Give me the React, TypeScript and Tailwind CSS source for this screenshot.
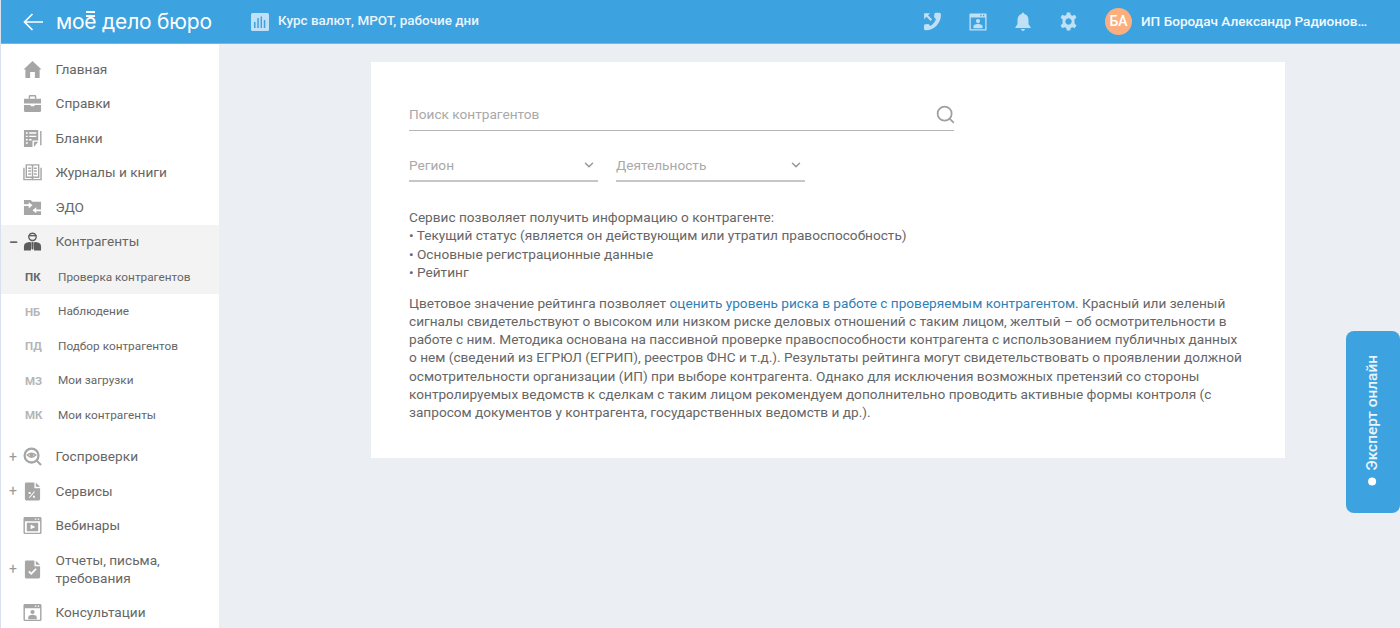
import React from 'react';
import { ChevronDown, Search } from 'lucide-react';

type IconProps = { className?: string };

const BackIcon = ({ className }: IconProps) => (
  <svg viewBox="0 0 20 18" className={className} fill="none" stroke="currentColor" strokeWidth="1.7">
    <path d="M20 9 H1.5 M9.5 1 L1.5 9 L9.5 17" />
  </svg>
);

const HomeIcon = ({ className }: IconProps) => (
  <svg viewBox="0 0 20 20" className={className} fill="currentColor">
    <path d="M10 1 L19.5 10 L17.5 10 L17.5 19 L12.5 19 L12.5 12.5 L7.5 12.5 L7.5 19 L2.5 19 L2.5 10 L0.5 10 Z" />
  </svg>
);

const CaseIcon = ({ className }: IconProps) => (
  <svg viewBox="0 0 20 20" className={className} fill="currentColor">
    <path d="M6 5 V2.5 Q6 1 7.5 1 H12.5 Q14 1 14 2.5 V5 H12.5 V2.5 H7.5 V5 Z" />
    <path d="M1 5 H19 V10 H1 Z" />
    <path d="M1 11.5 H8 V13 H12 V11.5 H19 V17.5 Q19 19 17.5 19 H2.5 Q1 19 1 17.5 Z" />
  </svg>
);

const FormIcon = ({ className }: IconProps) => (
  <svg viewBox="0 0 20 20" className={className} fill="currentColor">
    <path fillRule="evenodd" d="M1 1 H16 V12 H10 V19 H1 Z M3 3.5 V5 H5 V3.5 Z M6.5 3.5 V5 H14 V3.5 Z M3 7 V8.5 H5 V7 Z M6.5 7 V8.5 H14 V7 Z M3 10.5 V12 H5 V10.5 Z M6.5 10.5 V12 H9 V10.5 Z M3 14 V15.5 H5 V14 Z" />
    <path d="M11.5 13.5 H16 L11.5 19 Z" />
    <path d="M18 2 H19.5 V17 H18 Z" />
  </svg>
);

const BookIcon = ({ className }: IconProps) => (
  <svg viewBox="0 0 20 20" className={className} fill="none" stroke="currentColor" strokeWidth="1.5">
    <path d="M3.5 2 H9.2 L10 2.8 L10.8 2 H16.5 V15 H10.8 L10 16 L9.2 15 H3.5 Z" />
    <path d="M1 5 V17.5 H19 V5" />
    <path d="M5.5 5.5 H8.5 M5.5 8.5 H8.5 M5.5 11.5 H8.5 M11.5 5.5 H14.5 M11.5 8.5 H14.5 M11.5 11.5 H14.5" />
    <path d="M10 3 V18" />
  </svg>
);

const EdoIcon = ({ className }: IconProps) => (
  <svg viewBox="0 0 20 20" className={className} fill="currentColor">
    <path fillRule="evenodd" d="M1 2 H8 L10 4 H19 V18 H1 Z M1 6.5 V8.5 H6 V11 L10 7.5 L6 4.5 V6.5 Z M19 12 H14 V9.8 L10 13 L14 16 V14 H19 Z" />
  </svg>
);

const PersonIcon = ({ className }: IconProps) => (
  <svg viewBox="0 0 20 20" className={className} fill="currentColor">
    <path fillRule="evenodd" d="M10 0.5 A4.6 4.6 0 1 1 9.99 0.5 Z M10 2.2 C8 2.2 6.8 3.5 6.8 5 C6.8 7 8.2 8.2 10 8.2 C11.8 8.2 13.2 7 13.2 5 C13.2 3.5 12 2.2 10 2.2 Z" />
    <path d="M6 3.2 H14 V4.6 H6 Z" />
    <path d="M6.5 10.5 L9 11 L8.4 19.5 H1 V15 Q1 12 3.5 11.4 Z" />
    <path d="M13.5 10.5 L11 11 L11.6 19.5 H19 V15 Q19 12 16.5 11.4 Z" />
    <path d="M9.2 10.5 H10.8 L11 17 L10 19 L9 17 Z" />
  </svg>
);

const InspectIcon = ({ className }: IconProps) => (
  <svg viewBox="0 0 20 20" className={className} fill="none" stroke="currentColor">
    <circle cx="9" cy="9" r="7.3" strokeWidth="2.4" />
    <path d="M14.5 14.5 L19 19" strokeWidth="2.2" />
    <path d="M4.5 8.5 Q9 4.5 13.5 8.5 Q9 13 4.5 8.5 Z" strokeWidth="1.5" />
    <circle cx="9" cy="8.6" r="2" fill="currentColor" stroke="none" />
  </svg>
);

const ServiceIcon = ({ className }: IconProps) => (
  <svg viewBox="0 0 20 20" className={className} fill="currentColor">
    <path fillRule="evenodd" d="M3.5 0.5 H12 V6.5 H18 V18 Q18 19.5 16.5 19.5 H3.5 Q2 19.5 2 18 V2 Q2 0.5 3.5 0.5 Z M6 10.5 V12.5 H8 V10.5 Z M10.5 14.5 V16.5 H12.5 V14.5 Z M11.5 10 L6 16.5 H7.3 L12.8 10 Z" />
    <path d="M13.5 0.8 L18 5 H13.5 Z" />
  </svg>
);

const WebinarIcon = ({ className }: IconProps) => (
  <svg viewBox="0 0 20 20" className={className} fill="currentColor">
    <path fillRule="evenodd" d="M2 1 H18 Q19.5 1 19.5 2.5 V17.5 Q19.5 19 18 19 H2 Q0.5 19 0.5 17.5 V2.5 Q0.5 1 2 1 Z M2 5.5 V17.5 H18 V5.5 Z M12.5 2.5 V4 H14 V2.5 Z M15.5 2.5 V4 H17 V2.5 Z" />
    <path fillRule="evenodd" d="M4 7 H16 V16 H4 Z M8 9 V14 L13 11.5 Z" />
  </svg>
);

const ReportIcon = ({ className }: IconProps) => (
  <svg viewBox="0 0 20 20" className={className} fill="currentColor">
    <path fillRule="evenodd" d="M3.5 0.5 H12 V6.5 H18 V18 Q18 19.5 16.5 19.5 H3.5 Q2 19.5 2 18 V2 Q2 0.5 3.5 0.5 Z M5.5 12.5 L8.7 15.8 L14.5 9.8 L13.2 8.6 L8.7 13.2 L6.8 11.2 Z" />
    <path d="M13.5 0.8 L18 5 H13.5 Z" />
  </svg>
);

const ConsultIcon = ({ className }: IconProps) => (
  <svg viewBox="0 0 20 20" className={className} fill="currentColor">
    <path fillRule="evenodd" d="M2 1 H18 Q19.5 1 19.5 2.5 V17.5 Q19.5 19 18 19 H2 Q0.5 19 0.5 17.5 V2.5 Q0.5 1 2 1 Z M2 5.5 V17.5 H18 V5.5 Z M12.5 2.5 V4 H14 V2.5 Z M15.5 2.5 V4 H17 V2.5 Z" />
    <circle cx="10" cy="9.5" r="2.2" />
    <path d="M5.5 17 V15 Q5.5 13 7.5 12.8 L10 12.3 L12.5 12.8 Q14.5 13 14.5 15 V17 Z" />
  </svg>
);

const StatsIcon = ({ className }: IconProps) => (
  <svg viewBox="0 0 18 18" className={className}>
    <rect width="18" height="18" rx="1.5" fill="#bfe0f5" />
    <path d="M3 15 V9 H4.5 V15 Z M6.3 15 V5 H7.8 V15 Z M9.6 15 V3.5 H11 V15 Z M12.8 15 V7 H14.3 V15 Z" fill="#3ca2e0" />
  </svg>
);

const PhoneIcon = ({ className }: IconProps) => (
  <svg viewBox="0 0 20 20" className={className} fill="currentColor">
    <path d="M13.5 0.8 L17.2 0.8 Q18.8 0.8 18.9 2.5 C19.2 11 12 19.2 3 19.2 Q1 19.2 1 17.5 L1 14.5 Q1 13.2 2.2 13 L5.8 12.6 L7.6 14.8 C10.5 13.2 12.6 10.5 13.6 7.4 L11.6 5.6 L12 2 Q12.2 0.8 13.5 0.8 Z" />
    <path d="M1.2 1.2 H7.6 L5.3 3.5 L9.6 7.8 L8 9.4 L3.7 5.1 L1.2 7.6 Z" />
  </svg>
);

const WindowPersonIcon = ({ className }: IconProps) => (
  <svg viewBox="0 0 20 20" className={className} fill="currentColor">
    <path fillRule="evenodd" d="M1.5 0.5 H18.5 Q19.5 0.5 19.5 1.5 V18.5 Q19.5 19.5 18.5 19.5 H1.5 Q0.5 19.5 0.5 18.5 V1.5 Q0.5 0.5 1.5 0.5 Z M2 5 V18 H18 V5 Z M12.5 2 V3.5 H14 V2 Z M15.5 2 V3.5 H17 V2 Z" />
    <circle cx="10" cy="9" r="2.3" />
    <path d="M5 17 V14.5 Q5 13 7 12.7 L10 12 L13 12.7 Q15 13 15 14.5 V17 Z" />
  </svg>
);

const BellIcon = ({ className }: IconProps) => (
  <svg viewBox="0 0 20 20" className={className} fill="currentColor">
    <path d="M10 0.5 Q11.3 0.5 11.3 2 C14.3 2.8 15.5 5 15.5 8 V12 L18 16 H2 L4.5 12 V8 C4.5 5 5.7 2.8 8.7 2 Q8.7 0.5 10 0.5 Z" />
    <path d="M8 17 H12 Q11.6 19 10 19 Q8.4 19 8 17 Z" />
  </svg>
);

const GearIcon = ({ className }: IconProps) => (
  <svg viewBox="0 0 20 20" className={className} fill="currentColor">
    <path fillRule="evenodd" d="M8.2 0.5 H11.8 L12.3 3.1 L14.2 4 L16.6 2.9 L18.4 6 L16.3 7.7 V9.9 L16.4 12.3 L18.4 14 L16.6 17.1 L14.2 16 L12.3 16.9 L11.8 19.5 H8.2 L7.7 16.9 L5.8 16 L3.4 17.1 L1.6 14 L3.7 12.3 V7.7 L1.6 6 L3.4 2.9 L5.8 4 L7.7 3.1 Z M10 6.6 A3.4 3.4 0 1 0 10.01 6.6 Z" />
  </svg>
);

type NavItem = { label: React.ReactNode; icon: React.FC<IconProps>; mark?: '+' | '–'; tall?: boolean };

const topItems: NavItem[] = [
  { label: 'Главная', icon: HomeIcon },
  { label: 'Справки', icon: CaseIcon },
  { label: 'Бланки', icon: FormIcon },
  { label: 'Журналы и книги', icon: BookIcon },
  { label: 'ЭДО', icon: EdoIcon },
];

const subItems = [
  { code: 'ПК', label: 'Проверка контрагентов', active: true },
  { code: 'НБ', label: 'Наблюдение' },
  { code: 'ПД', label: 'Подбор контрагентов' },
  { code: 'МЗ', label: 'Мои загрузки' },
  { code: 'МК', label: 'Мои контрагенты' },
];

const bottomItems: NavItem[] = [
  { label: 'Госпроверки', icon: InspectIcon, mark: '+' },
  { label: 'Сервисы', icon: ServiceIcon, mark: '+' },
  { label: 'Вебинары', icon: WebinarIcon },
  {
    label: (
      <>
        Отчеты, письма,
        <br />
        требования
      </>
    ),
    icon: ReportIcon,
    mark: '+',
    tall: true,
  },
  { label: 'Консультации', icon: ConsultIcon },
];

const NavRow = ({ item }: { item: NavItem }) => {
  const Icon = item.icon;
  return (
    <div className={`flex items-center ${item.tall ? 'h-[52px]' : 'h-[34.5px]'}`}>
      <span className={`w-[22px] pl-[8px] text-[14px] leading-none ${item.mark === '–' ? 'font-bold text-[#666]' : 'text-[#999]'}`}>
        {item.mark}
      </span>
      <Icon className={`w-[19px] h-[19px] shrink-0 ${item.mark === '–' ? 'text-[#5c5c5c]' : 'text-[#a6a6a6]'}`} />
      <span className="ml-[13.5px] pb-[1px] text-[13.65px] leading-[18px] text-[#666]">{item.label}</span>
    </div>
  );
};

export default function App() {
  return (
    <div className="relative h-screen overflow-hidden flex flex-col border-l border-[#d8e2ee] bg-[#ebeff3] font-['Roboto',sans-serif]">
      <header className="h-[44px] shrink-0 flex items-center bg-[#3ca2e0] border-b border-[#6db9e8] text-white">
        <BackIcon className="ml-[22px] w-[20px] h-[18px]" />
        <div className="relative ml-[13px] w-[157px] font-['Inter',sans-serif] text-[21px] leading-none tracking-[-0.2px] whitespace-nowrap">
          мое дело бюро
          <span className="absolute left-[30px] top-0 w-[9px] h-[6px] border-y-2 border-white" />
        </div>
        <StatsIcon className="ml-[38px] w-[18px] h-[18px]" />
        <span className="ml-[9px] text-[13.45px] font-medium text-[#eaf5fc]">Курс валют, МРОТ, рабочие дни</span>
        <div className="ml-auto flex items-center text-[#bfe0f5]">
          <PhoneIcon className="w-[19px] h-[19px]" />
          <WindowPersonIcon className="ml-[27px] w-[18px] h-[18px]" />
          <BellIcon className="ml-[26px] w-[20px] h-[20px]" />
          <GearIcon className="ml-[26px] w-[19px] h-[19px]" />
        </div>
        <div className="ml-[27px] w-[27px] h-[27px] rounded-full bg-[#fcae7e] flex items-center justify-center text-[14px] font-medium">БА</div>
        <span className="ml-[9px] mr-[29px] w-[230px] text-[13.6px] font-medium truncate text-[#f2f9fd]">ИП Бородач Александр Радионович</span>
      </header>

      <div className="flex-1 flex min-h-0">
        <aside className="w-[218px] shrink-0 bg-white pt-[8px] overflow-hidden">
          {topItems.map((item, i) => (
            <NavRow key={i} item={item} />
          ))}
          <div className="bg-[#f3f3f3]">
            <NavRow item={{ label: 'Контрагенты', icon: PersonIcon, mark: '–' }} />
          </div>
          <div className="mb-[8px]">
            {subItems.map((s) => (
              <div key={s.code} className={`flex items-center h-[34.5px] pt-[3px] ${s.active ? 'bg-[#f3f3f3]' : ''}`}>
                <span className={`ml-[24px] w-[33px] text-[11.5px] font-bold ${s.active ? 'text-[#666]' : 'text-[#b5b5b5]'}`}>{s.code}</span>
                <span className="text-[11.8px] text-[#666]">{s.label}</span>
              </div>
            ))}
          </div>
          {bottomItems.map((item, i) => (
            <NavRow key={i} item={item} />
          ))}
        </aside>

        <main className="flex-1 pl-[152px] pr-[115px] pt-[18px]">
          <section className="bg-white h-[396px] px-[38px] pt-[38px]">
            <div className="w-[545px] h-[31px] flex items-center justify-between border-b border-[#b5b5b5] pb-[2px]">
              <span className="text-[13.65px] text-[#a9a9a9]">Поиск контрагентов</span>
              <Search className="-mr-[2px] w-[21px] h-[21px] text-[#a0a0a0]" strokeWidth={2} />
            </div>
            <div className="mt-[20px] flex gap-[18px]">
              {['Регион', 'Деятельность'].map((name) => (
                <div key={name} className="w-[189px] h-[31px] flex items-center justify-between border-b-2 border-[#c6c6c6] pr-[2px] pb-[1px]">
                  <span className="text-[13.65px] text-[#a9a9a9]">{name}</span>
                  <ChevronDown className="w-[14px] h-[14px] text-[#999]" strokeWidth={2.6} />
                </div>
              ))}
            </div>
            <div className="mt-[26px] text-[13.65px] leading-[18.3px] text-[#666]">
              Сервис позволяет получить информацию о контрагенте:
              <br />• Текущий статус (является он действующим или утратил правоспособность)
              <br />• Основные регистрационные данные
              <br />• Рейтинг
            </div>
            <p className="mt-[12.5px] w-[838px] text-[13.65px] leading-[18.2px] text-[#666]">
              Цветовое значение рейтинга позволяет{' '}
              <a className="text-[#2f7fb8]">оценить уровень риска в работе с проверяемым контрагентом.</a> Красный или зеленый сигналы
              свидетельствуют о высоком или низком риске деловых отношений с таким лицом, желтый – об осмотрительности в работе с ним.
              Методика основана на пассивной проверке правоспособности контрагента с использованием публичных данных о нем (сведений из
              ЕГРЮЛ (ЕГРИП), реестров ФНС и т.д.). Результаты рейтинга могут свидетельствовать о проявлении должной осмотрительности
              организации (ИП) при выборе контрагента. Однако для исключения возможных претензий со стороны контролируемых ведомств к
              сделкам с таким лицом рекомендуем дополнительно проводить активные формы контроля (с запросом документов у контрагента,
              государственных ведомств и др.).
            </p>
          </section>
        </main>
      </div>

      <div className="absolute right-0 top-[331px] w-[54px] h-[182px] rounded-[8px] bg-[#3ca2e0] flex items-center justify-center pb-[3px]">
        <div className="[writing-mode:vertical-rl] rotate-180 flex items-center gap-[7px] text-[15.4px] font-medium text-[#eaf5fc] whitespace-nowrap">
          <span className="w-[8px] h-[8px] rounded-full bg-white" />
          Эксперт онлайн
        </div>
      </div>
    </div>
  );
}
